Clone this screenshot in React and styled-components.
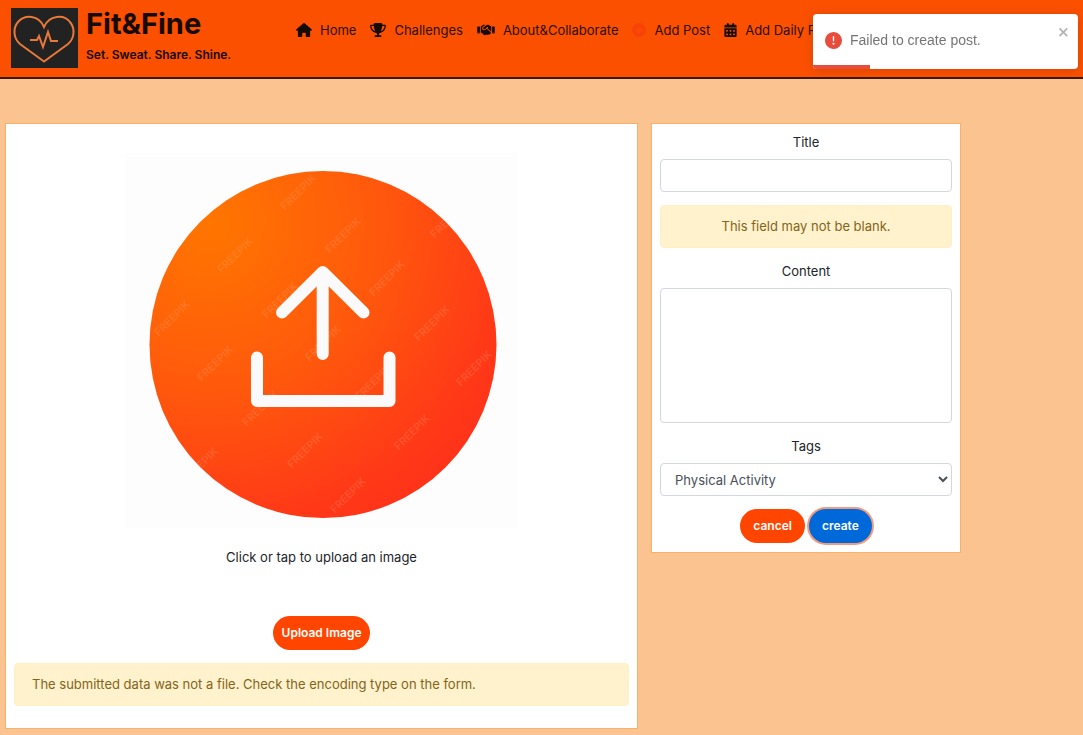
import React from "react";
import styled, { createGlobalStyle, css } from "styled-components";
import { FaHouse, FaTrophy, FaHandshake, FaCirclePlus, FaCalendarDays } from "react-icons/fa6";

const GlobalStyle = createGlobalStyle`
  *, *::before, *::after { box-sizing: border-box; }
  body {
    margin: 0;
    background: #fac38f;
    color: #212529;
    font: 400 13px/20px Inter, "Liberation Sans", sans-serif;
  }
  h1, p { margin: 0; }
  button, input, textarea, select { font: inherit; margin: 0; }
`;

const Header = styled.header`
  display: flex;
  align-items: flex-start;
  min-height: 79px;
  padding: 8px 11px 0;
  overflow: hidden;
  background: #fb5000;
  border-bottom: 2px solid #3a1a0c;
`;

const Brand = styled.a`
  display: flex;
  flex: none;
  gap: 8px;
  width: 285px;
  color: #160a04;
  text-decoration: none;
`;

const Logo = styled.svg`
  flex: none;
  width: 67px;
  height: 60px;
  background: #222222;
`;

const BrandText = styled.div`
  display: flex;
  flex-direction: column;
  gap: 5px;
`;

const BrandName = styled.h1`
  font-size: 29px;
  line-height: 32px;
  font-weight: 700;
`;

const Tagline = styled.p`
  font-size: 12px;
  line-height: 20px;
  font-weight: 600;
`;

const Nav = styled.nav`
  display: flex;
  gap: 14px;
  padding-top: 12px;
  white-space: nowrap;
`;

const NavLink = styled.a`
  display: flex;
  align-items: center;
  gap: 8px;
  line-height: 20px;
  color: #2b1005;
  text-decoration: none;

  svg {
    width: ${(p) => p.$icon || 16}px;
    height: 14px;
    color: ${(p) => (p.$accent ? "#f94208" : "#160a04")};
  }
`;

const Main = styled.main`
  display: grid;
  grid-template-columns: minmax(0, 59%) 310px;
  align-items: start;
  gap: 13px;
  padding: 44px 5px 6px;

  @media (max-width: 800px) {
    grid-template-columns: minmax(0, 1fr);
  }
`;

const Card = styled.section`
  display: flex;
  flex-direction: column;
  padding: ${(p) => p.$padding};
  background: #ffffff;
  border: 1px solid #f6b269;
`;

const UploadLabel = styled.label`
  display: flex;
  flex-direction: column;
  align-items: center;
  gap: 19px;
  cursor: pointer;
`;

const UploadArt = styled.svg`
  display: block;
  width: 393px;
  max-width: 100%;
  height: auto;
  background: #fdfdfd;
`;

const FileInput = styled.input`
  position: absolute;
  width: 1px;
  height: 1px;
  opacity: 0;
`;

const Actions = styled.div`
  display: flex;
  justify-content: center;
  gap: 4px;
  padding: ${(p) => p.$padding};
`;

const PillButton = styled.button`
  height: 34px;
  padding: 0 ${(p) => p.$inset || 13}px;
  border: 0;
  border-radius: 17px;
  background: #ff4500;
  color: #ffffff;
  font-size: 12px;
  font-weight: 600;
  line-height: 18px;
  cursor: pointer;
  ${(p) =>
    p.$primary &&
    css`
      background: #0069d9;
      box-shadow: 0 0 0 2px #f19a80;
    `}
`;

const Alert = styled.p`
  padding: 11px 17px;
  border: 1px solid #ffefc4;
  border-radius: 4px;
  background: #fff2cd;
  color: #856419;
  line-height: 19px;
  text-align: ${(p) => p.$align || "left"};
`;

const Field = styled.div`
  display: flex;
  flex-direction: column;
  gap: 7px;
  padding-bottom: 13px;
`;

const FieldLabel = styled.label`
  line-height: 20px;
  text-align: center;
`;

const control = css`
  display: block;
  width: 100%;
  border: 1px solid #d3d8de;
  border-radius: 4px;
  background: #ffffff;
  color: #495057;
`;

const TextInput = styled.input`
  ${control}
  height: 33px;
  padding: 0 12px;
`;

const TextArea = styled.textarea`
  ${control}
  height: 135px;
  padding: 6px 12px;
  resize: none;
`;

const Select = styled.select`
  ${control}
  height: 33px;
  padding: 0 10px;
`;

const Toast = styled.div`
  position: fixed;
  top: 14px;
  right: 5px;
  display: flex;
  align-items: flex-start;
  width: 265px;
  height: 55px;
  padding: 10px 8px 0 12px;
  overflow: hidden;
  border-radius: 4px;
  background: #ffffff;
  box-shadow: 0 1px 10px rgba(0, 0, 0, 0.15);
  color: #757575;
  font-family: "Liberation Sans", Arial, sans-serif;
  font-size: 14px;
`;

const ToastBody = styled.div`
  display: flex;
  flex: 1;
  align-items: center;
  gap: 8px;
  padding-top: 6px;

  svg { flex: none; width: 17px; height: 17px; }
`;

const CloseButton = styled.button`
  display: flex;
  padding: 1px 0;
  border: 0;
  background: none;
  color: #b3b3b3;
  cursor: pointer;

  svg { width: 12px; height: 14px; }
`;

const Progress = styled.div`
  position: absolute;
  bottom: 0;
  left: 0;
  width: 57px;
  height: 4px;
  background: #e74c3c;
`;

const links = [
  { label: "Home", Icon: FaHouse },
  { label: "Challenges", Icon: FaTrophy },
  { label: "About&Collaborate", Icon: FaHandshake, size: 18 },
  { label: "Add Post", Icon: FaCirclePlus, size: 14, accent: true },
  { label: "Add Daily Routine", Icon: FaCalendarDays, size: 13 },
];

const marks = [
  [173, 39], [218, 82], [110, 102], [262, 125], [155, 147], [47, 165], [307, 170],
  [198, 190], [90, 210], [349, 215], [248, 229], [135, 255], [287, 279], [180, 297],
  [75, 312], [223, 342], [323, 67],
];

function UploadPicture() {
  return (
    <UploadArt viewBox="0 0 393 375" aria-hidden="true">
      <defs>
        <radialGradient id="sun" gradientUnits="userSpaceOnUse" cx="85" cy="70" r="370">
          <stop offset="0" stopColor="#ff7600" />
          <stop offset="0.45" stopColor="#ff590c" />
          <stop offset="0.8" stopColor="#ff3a17" />
          <stop offset="1" stopColor="#ff2d1a" />
        </radialGradient>
        <clipPath id="disc"><circle cx="198" cy="191.500" r="173.500" /></clipPath>
      </defs>
      <circle cx="198" cy="191.500" r="173.500" fill="url(#sun)" />
      <g clipPath="url(#disc)" fill="#ffb08a" fillOpacity="0.2" fontSize="11" fontWeight="700" textAnchor="middle">
        {marks.map(([x, y]) => (
          <text key={`${x}-${y}`} x={x} y={y + 4} transform={`rotate(-45 ${x} ${y})`}>FREEPIK</text>
        ))}
      </g>
      <g fill="none" stroke="#fbfafa" strokeWidth="12" strokeLinecap="round" strokeLinejoin="round">
        <path d="M197.700 119V201M157 159.500L197.700 119L238.500 159.500" />
        <path d="M132 204.500V248H264.500V204.500" />
      </g>
    </UploadArt>
  );
}

export default function App() {
  return (
    <>
      <GlobalStyle />
      <Header>
        <Brand href="#home">
          <Logo viewBox="0 0 67 60" aria-hidden="true">
            <g fill="none" stroke="#e8793a" strokeWidth="2">
              <path d="M33 53.500L9 36C2 30 2 20 7 14C14 6 28 7 33 19C38 7 53 6 59 14C64 20 64 30 57 36Z" />
              <path d="M19 32H26L28 28L32 39L37 24L40 33H47" />
            </g>
          </Logo>
          <BrandText>
            <BrandName>Fit&amp;Fine</BrandName>
            <Tagline>Set. Sweat. Share. Shine.</Tagline>
          </BrandText>
        </Brand>
        <Nav>
          {links.map(({ label, Icon, size, accent }) => (
            <NavLink key={label} href="#" $icon={size} $accent={accent}>
              <Icon />
              {label}
            </NavLink>
          ))}
        </Nav>
      </Header>

      <Main>
        <Card $padding="29px 8px 22px">
          <UploadLabel htmlFor="image">
            <UploadPicture />
            Click or tap to upload an image
          </UploadLabel>
          <FileInput id="image" type="file" accept="image/*" />
          <Actions $padding="49px 0 13px">
            <PillButton type="button" $inset={9}>Upload Image</PillButton>
          </Actions>
          <Alert>The submitted data was not a file. Check the encoding type on the form.</Alert>
        </Card>

        <Card as="form" $padding="8px 8px 9px">
          <Field>
            <FieldLabel htmlFor="title">Title</FieldLabel>
            <TextInput id="title" type="text" />
          </Field>
          <Field>
            <Alert $align="center">This field may not be blank.</Alert>
          </Field>
          <Field>
            <FieldLabel htmlFor="content">Content</FieldLabel>
            <TextArea id="content" />
          </Field>
          <Field>
            <FieldLabel htmlFor="tags">Tags</FieldLabel>
            <Select id="tags">
              <option>Physical Activity</option>
            </Select>
          </Field>
          <Actions $padding="0">
            <PillButton type="button">cancel</PillButton>
            <PillButton type="button" $primary>create</PillButton>
          </Actions>
        </Card>
      </Main>

      <Toast role="alert">
        <ToastBody>
          <svg viewBox="0 0 24 24" fill="#e74c3c" aria-hidden="true">
            <path d="M11.983 0a12.206 12.206 0 00-8.510 3.653A11.800 11.800 0 000 12.207 11.779 11.779 0 0011.800 24h.214A12.111 12.111 0 0024 11.791 11.766 11.766 0 0011.983 0zM10.500 16.542a1.476 1.476 0 011.449-1.530h.027a1.527 1.527 0 011.523 1.470 1.475 1.475 0 01-1.449 1.530h-.027a1.529 1.529 0 01-1.523-1.470zM11 12.500v-6a1 1 0 012 0v6a1 1 0 11-2 0z" />
          </svg>
          Failed to create post.
        </ToastBody>
        <CloseButton type="button" aria-label="close">
          <svg viewBox="0 0 14 16" fill="currentColor" aria-hidden="true">
            <path fillRule="evenodd" d="M7.710 8.230l3.750 3.750-1.480 1.480-3.750-3.750-3.750 3.750L1 11.980l3.750-3.750L1 4.480 2.480 3l3.750 3.750L9.980 3l1.480 1.480-3.750 3.750z" />
          </svg>
        </CloseButton>
        <Progress />
      </Toast>
    </>
  );
}
